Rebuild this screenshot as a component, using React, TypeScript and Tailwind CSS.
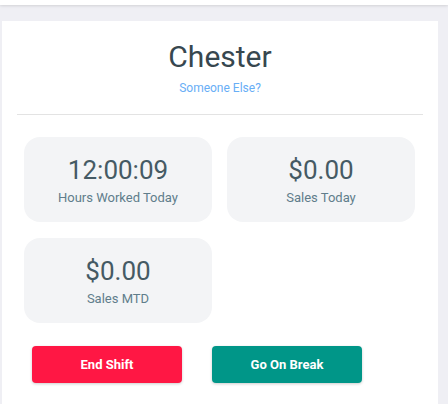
import React from "react";

const stats = [
  { value: "12:00:09", label: "Hours Worked Today" },
  { value: "$0.00", label: "Sales Today" },
  { value: "$0.00", label: "Sales MTD" },
];

function StatCard({ value, label }: { value: string; label: string }) {
  return (
    <div className="h-[85px] rounded-[16px] bg-[#f3f4f6] flex flex-col items-center pt-[17px]">
      <div className="text-[26px] leading-[32px] text-[#455a64]">{value}</div>
      <div className="mt-[3px] text-[13px] leading-[18px] text-[#607d8b]">{label}</div>
    </div>
  );
}

export default function App() {
  return (
    <div
      className="w-[448px] h-[404px] bg-[#efeff4] overflow-hidden"
      style={{ fontFamily: "Roboto, 'Liberation Sans', sans-serif" }}
    >
      {/* Top bar */}
      <div className="h-[5px] bg-white shadow-[0_1px_3px_rgba(0,0,0,0.12)]" />

      {/* Card */}
      <div className="mt-[16px] ml-[2px] w-[436px] h-[383px] bg-white px-[15px] pt-[18px]">
        <div className="text-center">
          <h1 className="text-[30px] leading-[36px] text-[#37474f]">Chester</h1>
          <div className="mt-[5px] text-[12px] leading-[16px] text-[#68aef6]">Someone Else?</div>
        </div>

        <div className="mt-[18px] border-t border-[#e3e3e3]" />

        <div className="mt-[22px] px-[7px] grid grid-cols-[188px_188px] gap-x-[15px] gap-y-[16px]">
          {stats.map((s, i) => (
            <StatCard key={i} value={s.value} label={s.label} />
          ))}
        </div>

        <div className="mt-[23px] pl-[15px] flex gap-[30px]">
          <button className="w-[150px] h-[37px] rounded-[4px] bg-[#ff1744] text-white text-[13px] font-bold shadow-[0_1px_3px_rgba(0,0,0,0.2)]">
            End Shift
          </button>
          <button className="w-[150px] h-[37px] rounded-[4px] bg-[#009688] text-white text-[13px] font-bold shadow-[0_1px_3px_rgba(0,0,0,0.2)]">
            Go On Break
          </button>
        </div>
      </div>
    </div>
  );
}
